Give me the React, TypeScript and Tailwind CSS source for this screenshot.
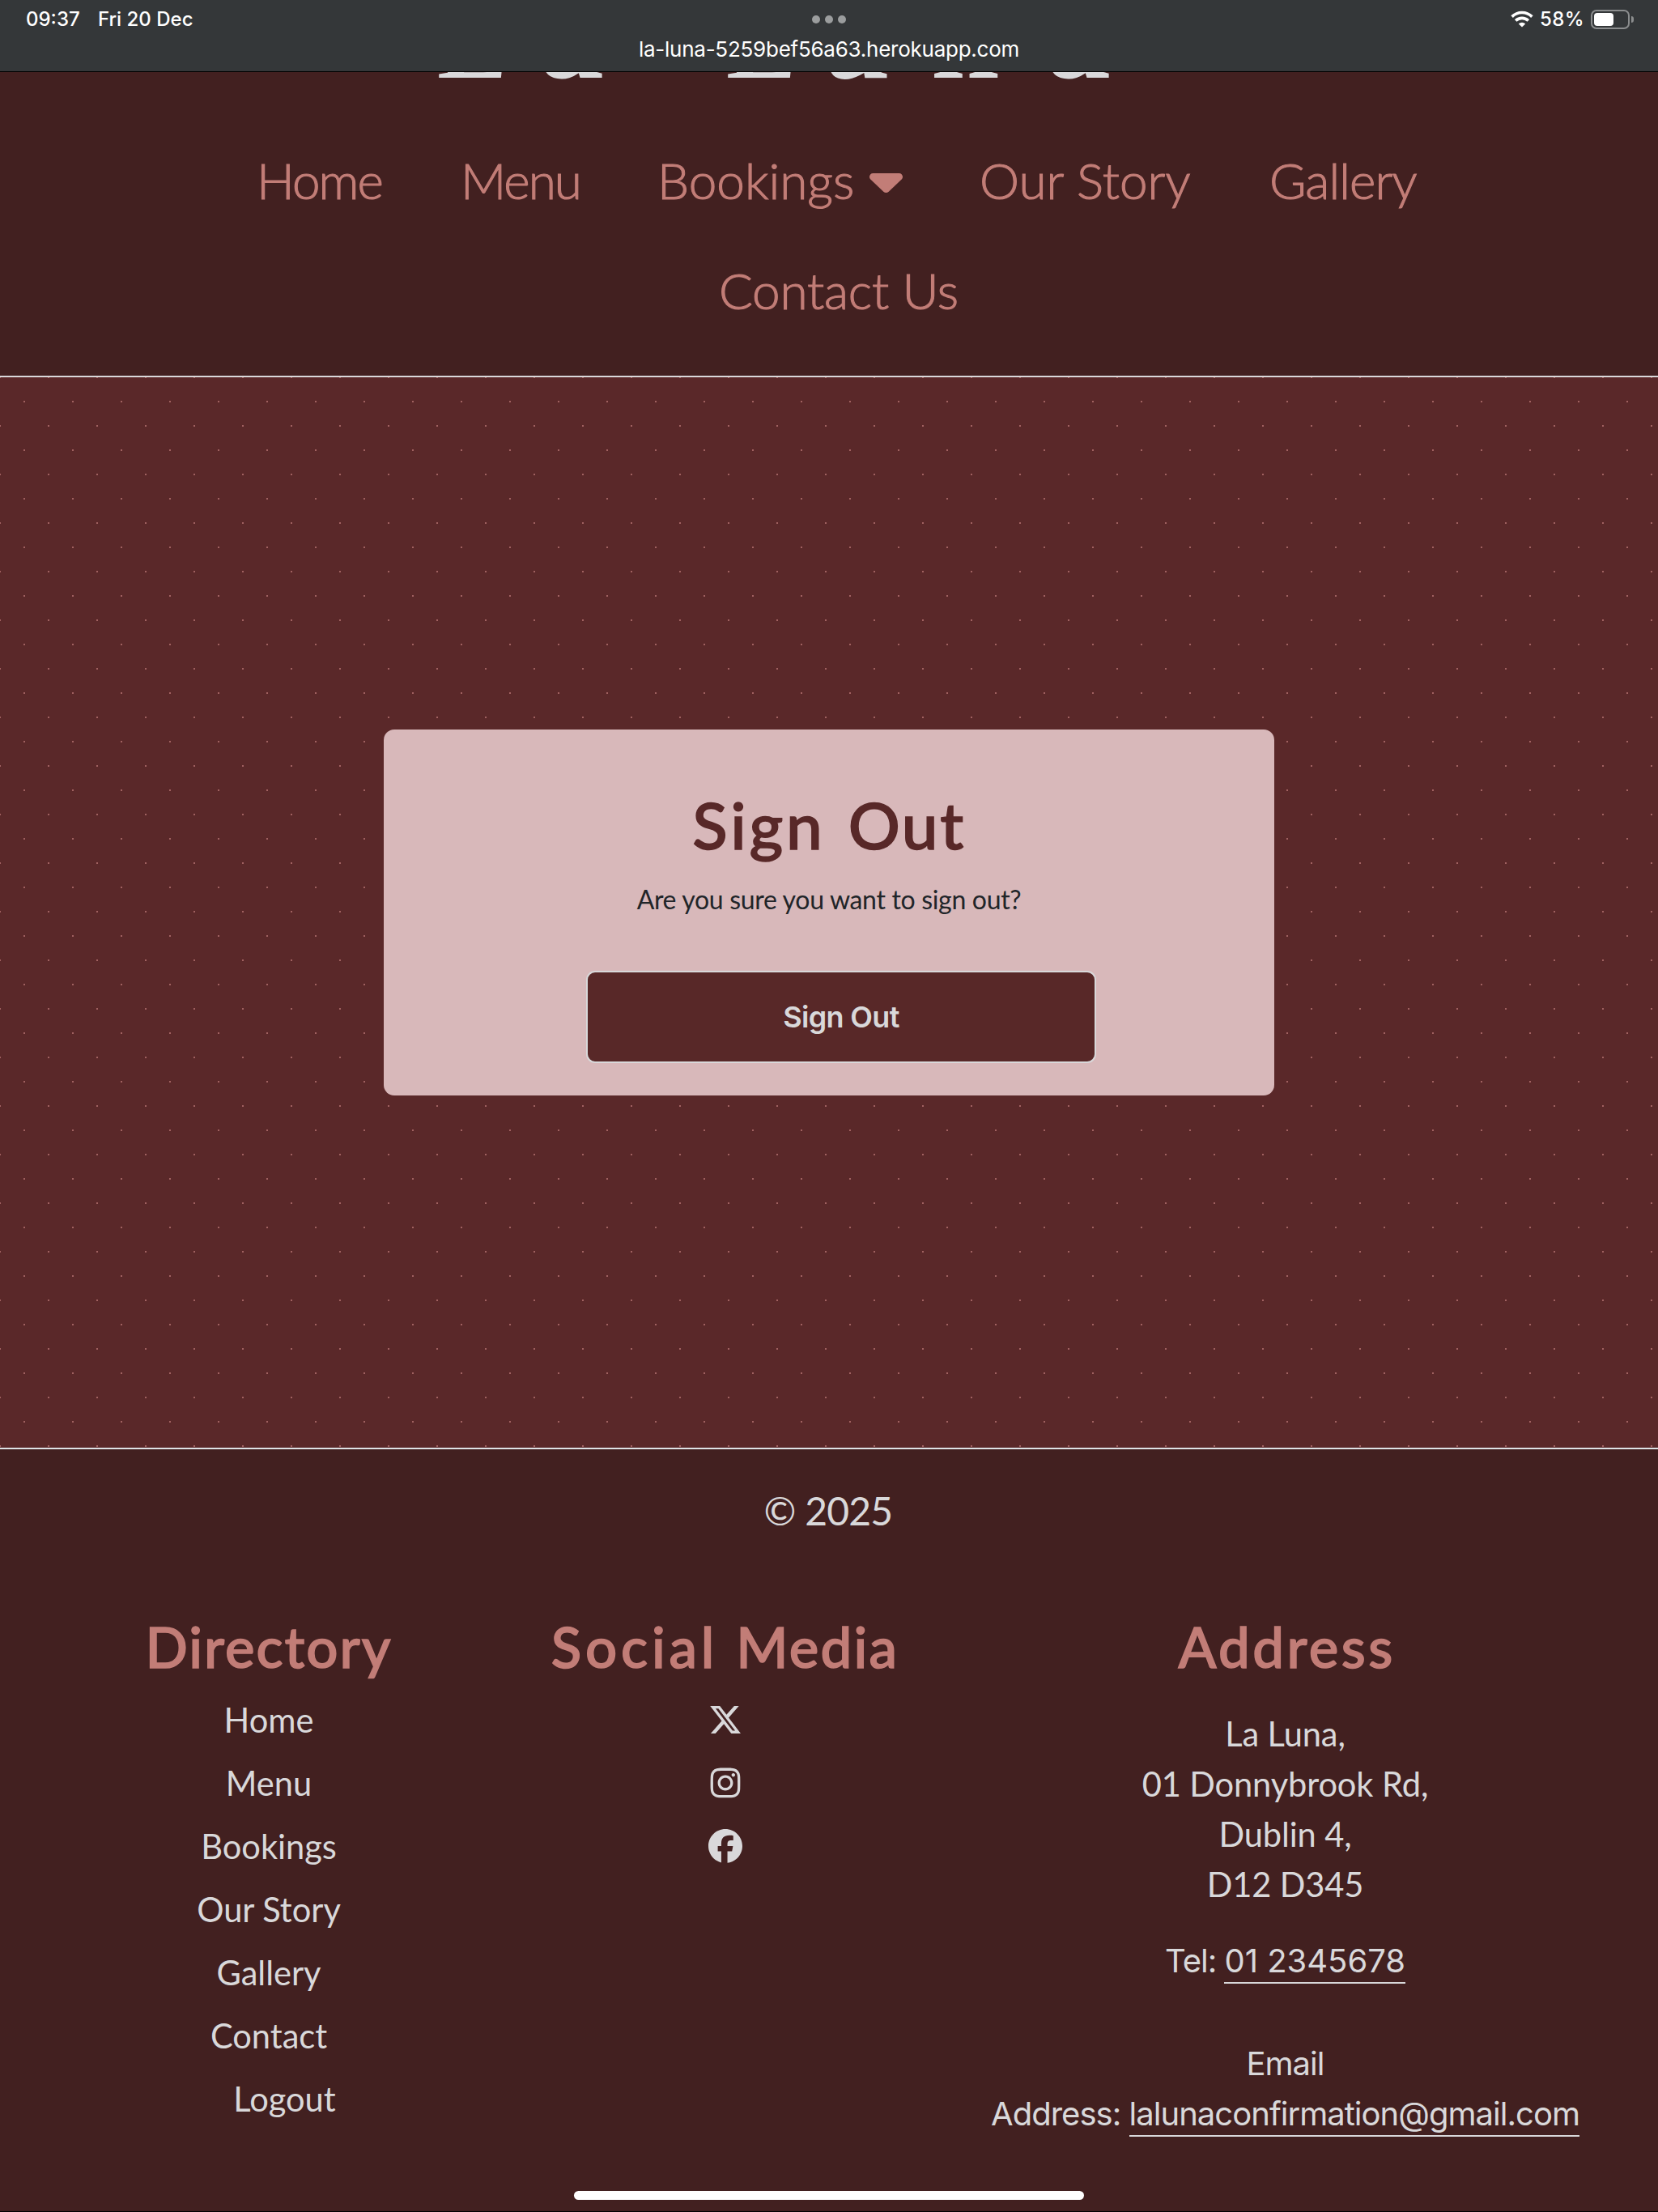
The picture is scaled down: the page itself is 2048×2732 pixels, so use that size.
import React from "react";
import { FaXTwitter, FaInstagram, FaFacebook } from "react-icons/fa6";

const directory = ["Home", "Menu", "Bookings", "Our Story", "Gallery", "Contact"];
const address = ["La Luna,", "01 Donnybrook Rd,", "Dublin 4,", "D12 D345"];

function StatusBar() {
  return (
    <div className="relative h-[89px] border-b border-black bg-[#343739] font-[Inter,sans-serif] text-white">
      <div className="flex h-[47px] items-center pl-8 text-[24px] font-medium">
        <span className="w-[89px]">09:37</span>
        <span className="flex-1">Fri 20 Dec</span>
        <svg className="mr-[8px]" width="28" height="21" viewBox="0 0 28 21" fill="none">
          <path d="M1.6 7.6a17.6 17.6 0 0 1 24.8 0" stroke="#fff" strokeWidth="3.6" />
          <path d="M6.2 12.6a11 11 0 0 1 15.6 0" stroke="#fff" strokeWidth="3.6" />
          <path d="M9.8 16.4a6 6 0 0 1 8.4 0L14 20.6z" fill="#fff" />
        </svg>
        <span className="w-[63px] tracking-[0.4px]">58%</span>
        <div className="h-6 w-12 rounded-[7px] border-2 border-[#8b8d8e] p-[2px]">
          <div className="h-4 w-6 rounded-[4px] bg-white" />
        </div>
        <div className="mr-[30px] ml-[2px] h-2 w-[3px] rounded-r-full bg-[#8b8d8e]" />
      </div>
      <div className="h-[30px] text-center text-[26px] leading-[28px] tracking-[-0.25px]">la-luna-5259bef56a63.herokuapp.com</div>
      <div className="absolute top-[19px] left-[1003px] flex gap-[6px]">
        <span className="size-[10px] rounded-full bg-[#9b9d9e]" />
        <span className="size-[10px] rounded-full bg-[#9b9d9e]" />
        <span className="size-[10px] rounded-full bg-[#9b9d9e]" />
      </div>
    </div>
  );
}

function Header() {
  return (
    <header className="h-[377px] border-b-2 border-[#d9d8da] bg-[#422020]">
      <div className="h-[28px] overflow-hidden">
        <h1 className="-mt-[112px] flex h-[130px] items-baseline pl-[540px] font-['Liberation_Serif',serif] text-[130px] leading-[130px] font-bold text-[#d9d8da]">
          <span className="w-[126px]">L</span>
          <span className="w-[231px] text-[160px] leading-[130px]">a</span>
          <span className="w-[118px]">L</span>
          <span className="w-[135px] text-[152px] leading-[130px]">u</span>
          <span className="w-[142px] text-[152px] leading-[130px]">n</span>
          <span className="text-[160px] leading-[130px]">a</span>
        </h1>
      </div>
      <nav className="mt-[66px] text-[62px] leading-[78px] font-light whitespace-nowrap text-[#c27d77] [-webkit-text-stroke:1.1px_#c27d77]">
        <div className="flex pl-[317px]">
          <a className="w-[252px] tracking-[-1.9px]">Home</a>
          <a className="w-[243px] tracking-[-2px]">Menu</a>
          <a className="flex w-[398px] items-center">
            <span className="w-[262px]">Bookings</span>
            <svg className="mt-2" width="41" height="24" viewBox="0 0 41 24" fill="#c27d77">
              <path d="M4.5 0h32c4 0 6 4.8 3.2 7.6l-16 15.2c-1.8 1.6-4.6 1.6-6.4 0l-16-15.2C-1.5 4.8.5 0 4.5 0z" />
            </svg>
          </a>
          <a className="w-[358px]">Our Story</a>
          <a className="tracking-[-0.9px]">Gallery</a>
        </div>
        <div className="mt-[58px] pl-[888px]">
          <a className="tracking-[-0.2px]">Contact Us</a>
        </div>
      </nav>
    </header>
  );
}

function Footer() {
  return (
    <footer className="h-[944px] border-t-2 border-b border-t-[#dee2e6] border-b-black bg-[#422020] pt-[40px] text-[#d9d8da]">
      <p className="pr-[2px] text-center text-[48px] leading-[72px] tracking-[-0.8px]">© 2025</p>
      <div className="mt-[90px] grid grid-cols-[664px_463px_921px] text-center text-[41.6px]">
        <section>
          <h2 className="text-[69px] leading-[84px] font-medium tracking-[2px] text-[#c27d77] [-webkit-text-stroke:1.5px_#c27d77]">Directory</h2>
          <ul className="mt-[9px] leading-[78px]">
            {directory.map((d) => (
              <li key={d}>{d}</li>
            ))}
            <li className="pl-[39px]">Logout</li>
          </ul>
        </section>
        <section>
          <h2 className="text-[69px] leading-[84px] font-medium tracking-[4.8px] whitespace-nowrap text-[#c27d77] [-webkit-text-stroke:1.5px_#c27d77]">
            Social <span className="tracking-[2.2px]">Media</span>
          </h2>
          <ul className="mt-[9px] text-[42px]">
            <li className="flex h-[78px] items-center justify-center"><FaXTwitter /></li>
            <li className="flex h-[78px] items-center justify-center"><FaInstagram /></li>
            <li className="flex h-[78px] items-center justify-center"><FaFacebook /></li>
          </ul>
        </section>
        <section className="leading-[62px]">
          <h2 className="pl-[4px] text-[69px] leading-[84px] font-medium tracking-[3.4px] text-[#c27d77] [-webkit-text-stroke:1.5px_#c27d77]">Address</h2>
          <div className="mt-[34px] tracking-[-0.1px]">
            {address.map((a) => (
              <div key={a}>{a}</div>
            ))}
          </div>
          <div className="font-[Inter,sans-serif] text-[40px]">
            <p className="mt-[33px]">
              <span className="tracking-[-1px]">Tel: </span>
              <a className="border-b-2 border-[#d9d8da] pb-[2px]">01 2345678</a>
            </p>
            <p className="mt-[65px] tracking-[-0.97px]">
              Email
              <br />
              Address: <a className="border-b-2 border-[#d9d8da] pb-[2px]">lalunaconfirmation@gmail.com</a>
            </p>
          </div>
        </section>
      </div>
    </footer>
  );
}

export default function App() {
  return (
    <div className="relative h-[2732px] w-[2048px] overflow-hidden bg-[#422020] font-[Lato,sans-serif]">
      <StatusBar />
      <Header />
      <main className="h-[1322px] bg-[#5a2829] bg-[conic-gradient(from_90deg_at_58px_58px,#a06160_90deg,transparent_0),conic-gradient(from_90deg_at_58px_58px,#a06160_90deg,transparent_0)] bg-[length:60px_60px] bg-[position:-29px_-29px,-59px_-59px] pt-[435px]">
        <div className="ml-[474px] h-[452px] w-[1100px] rounded-[13px] bg-[#d8b8ba] pt-[69px] text-center">
          <h1 className="text-[80px] leading-[96px] font-medium tracking-[3.8px] text-[#582828] [word-spacing:4px] [-webkit-text-stroke:1.5px_#582828]">
            Sign <span className="tracking-[2.6px]">Out</span>
          </h1>
          <p className="mt-[21px] text-[32px] leading-[48px] tracking-[-0.32px] text-[#212529]">Are you sure you want to sign out?</p>
          <button className="mt-[64px] ml-[30px] h-[114px] w-[630px] rounded-[11px] border-2 border-[#d9d8da] bg-[#582828] font-[Inter,sans-serif] text-[36px] font-semibold tracking-[-0.67px] text-[#d9d8da]">
            Sign Out
          </button>
        </div>
      </main>
      <Footer />
      <div className="absolute bottom-[15px] left-[709px] h-[11px] w-[630px] rounded-full bg-white" />
    </div>
  );
}
